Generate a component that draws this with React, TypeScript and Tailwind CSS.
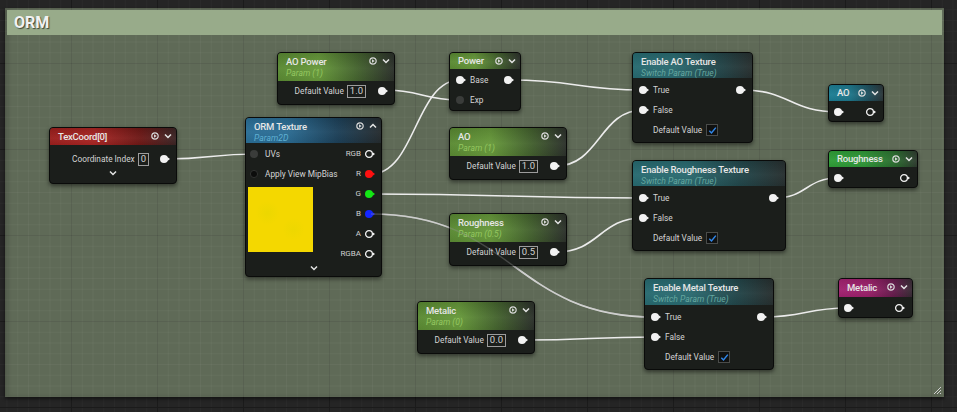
import React from 'react'

type PinKind = 'full' | 'hollow' | 'dim' | 'dark'

const label = 'whitespace-nowrap text-[8.3px] leading-none text-[#d4d4d4]'

const greenHead =
  'bg-[linear-gradient(180deg,rgba(0,0,0,0.12)_0%,rgba(255,255,255,0.03)_55%,rgba(0,0,0,0.05)_100%),linear-gradient(90deg,#5a8a33_0%,#67993b_35%,#45642f_68%,#2c312b_100%)]'
const tealHead =
  'bg-[linear-gradient(180deg,rgba(0,0,0,0.1)_0%,rgba(255,255,255,0.03)_55%,rgba(0,0,0,0.05)_100%),linear-gradient(90deg,#276a70_0%,#2a6a70_35%,#22474b_70%,#272f2f_100%)]'

const wires: [number, number, number, number][] = [
  [166, 159, 256, 154],
  [384, 90, 460, 100],
  [371, 174, 460, 80],
  [510, 80, 643, 90],
  [556, 166, 643, 110],
  [371, 194, 643, 198],
  [371, 214, 655, 317],
  [556, 252, 643, 218],
  [524, 340, 655, 337],
  [742, 90, 838, 112],
  [775, 198, 838, 178],
  [763, 317, 848, 308],
]

function wirePath([x1, y1, x2, y2]: [number, number, number, number]) {
  const d = Math.max(Math.abs(x2 - x1) * 0.5, 24)
  return `M${x1} ${y1}C${x1 + d} ${y1} ${x2 - d} ${y2} ${x2} ${y2}`
}

function Pin({ kind = 'full', color = '#f2f2f2', className = '' }: { kind?: PinKind; color?: string; className?: string }) {
  return (
    <svg width="12" height="10" viewBox="0 0 12 10" className={`shrink-0 ${className}`}>
      {kind === 'full' && (
        <>
          <circle cx="5" cy="5" r="4" fill={color} />
          <path d="M8.4 3.1 L11 5 L8.4 6.9Z" fill={color} />
        </>
      )}
      {kind === 'hollow' && (
        <>
          <circle cx="5" cy="5" r="3.4" fill="none" stroke={color} strokeWidth="1.3" />
          <path d="M9 3.4 L11 5 L9 6.6Z" fill={color} />
        </>
      )}
      {kind === 'dim' && <circle cx="5" cy="5" r="4" fill="#3a3c3a" />}
      {kind === 'dark' && <circle cx="5" cy="5" r="3.6" fill="#0c0d0c" stroke="#303230" strokeWidth="1" />}
    </svg>
  )
}

function Chevron({ up = false }: { up?: boolean }) {
  return (
    <svg width="8" height="8" viewBox="0 0 8 8" className="shrink-0">
      <path d={up ? 'M1 5.5 L4 2.5 L7 5.5' : 'M1 2.5 L4 5.5 L7 2.5'} fill="none" stroke="#e4e4e4" strokeWidth="1.5" />
    </svg>
  )
}

function HeaderIcons({ up = false }: { up?: boolean }) {
  return (
    <div className="absolute right-[4px] top-[4px] flex items-center gap-[5px]">
      <svg width="8" height="8" viewBox="0 0 8 8">
        <circle cx="4" cy="4" r="3.2" fill="none" stroke="#d8d8d8" strokeWidth="1.2" />
        <path d="M3 2.3 L5.7 4 L3 5.7Z" fill="#d8d8d8" />
      </svg>
      <Chevron up={up} />
    </div>
  )
}

function Node({ pos, children }: { pos: string; children: React.ReactNode }) {
  return (
    <div className={`absolute overflow-hidden rounded-[4px] border border-[#0a0b0a] bg-[#1b1e1b] shadow-[0_2px_4px_rgba(0,0,0,0.5)] ${pos}`}>
      {children}
    </div>
  )
}

function SimpleHeader({ h, bg, title, icons = true }: { h: string; bg: string; title: string; icons?: boolean }) {
  return (
    <div className={`relative flex items-center pl-[8px] ${h} ${bg}`}>
      <span className="text-[9.5px] font-medium leading-none tracking-[-0.2px] text-[#e6e6e6]">{title}</span>
      {icons ? <HeaderIcons /> : null}
    </div>
  )
}

function TitledHeader({ h, bg, title, sub, subColor, icons = true, up = false }: { h: string; bg: string; title: string; sub: string; subColor: string; icons?: boolean; up?: boolean }) {
  return (
    <div className={`relative pl-[8px] pt-[3px] ${h} ${bg}`}>
      <div className="h-[12px] text-[9.5px] font-medium leading-[12px] tracking-[-0.2px] text-[#e6e6e6]">{title}</div>
      <div className={`h-[10px] text-[8.6px] italic leading-[10px] ${subColor}`}>{sub}</div>
      {icons ? <HeaderIcons up={up} /> : null}
    </div>
  )
}

function ValueBox({ children }: { children: React.ReactNode }) {
  return (
    <span className="ml-[3px] flex h-[13px] items-center border border-[#9c9c9c] px-[2px] text-[9.5px] leading-none text-[#d2d2d2]">{children}</span>
  )
}

function Check() {
  return (
    <span className="ml-[4px] flex h-[12px] w-[12px] items-center justify-center border border-[#4a4c4a] bg-[#101110]">
      <svg width="9" height="9" viewBox="0 0 9 9">
        <path d="M1.3 4.8 L3.5 7 L7.8 1.6" fill="none" stroke="#2f86e8" strokeWidth="1.5" />
      </svg>
    </span>
  )
}

function ParamNode({ pos, title, sub, value }: { pos: string; title: string; sub: string; value: string }) {
  return (
    <Node pos={pos}>
      <TitledHeader h="h-[28px]" bg={greenHead} title={title} sub={sub} subColor="text-[#94c760]" />
      <div className="flex h-[20px] items-center justify-end pr-[5px]">
        <span className={label}>Default Value</span>
        <ValueBox>{value}</ValueBox>
        <Pin className="ml-[11px]" />
      </div>
      <div className="h-[3px]" />
    </Node>
  )
}

function SwitchNode({ pos, title, h }: { pos: string; title: string; h: string }) {
  return (
    <Node pos={pos}>
      <TitledHeader h={h} bg={tealHead} title={title} sub="Switch Param (True)" subColor="text-[#66a8a0]" icons={false} />
      <div className="pb-[2px] pt-[2px]">
        <div className="flex h-[20px] items-center justify-between pl-[5px] pr-[5px]">
          <div className="flex items-center">
            <Pin />
            <span className={`ml-[3px] ${label}`}>True</span>
          </div>
          <Pin />
        </div>
        <div className="flex h-[20px] items-center pl-[5px]">
          <Pin />
          <span className={`ml-[3px] ${label}`}>False</span>
        </div>
        <div className="flex h-[20px] items-center pl-[20px]">
          <span className={label}>Default Value</span>
          <Check />
        </div>
      </div>
    </Node>
  )
}

function OutputNode({ pos, h, bg, title }: { pos: string; h: string; bg: string; title: string }) {
  return (
    <Node pos={pos}>
      <SimpleHeader h={h} bg={bg} title={title} />
      <div className="flex h-[20px] items-center justify-between pl-[4px] pr-[6px] pt-[1px]">
        <Pin />
        <Pin kind="hollow" />
      </div>
    </Node>
  )
}

function TexRow({ name, kind = 'hollow', color = '#f2f2f2' }: { name: string; kind?: PinKind; color?: string }) {
  return (
    <div className="flex h-[20px] items-center justify-end">
      <span className="text-[8px] leading-none text-[#cfcfcf]">{name}</span>
      <Pin kind={kind} color={color} className="ml-[3px]" />
    </div>
  )
}

export default function App() {
  return (
    <div className="relative h-[412px] w-[957px] overflow-hidden bg-[#252525] bg-[linear-gradient(to_right,#1b1b1b_1px,transparent_1px),linear-gradient(to_bottom,#1b1b1b_1px,transparent_1px),linear-gradient(to_right,#2a2a2a_1px,transparent_1px),linear-gradient(to_bottom,#2a2a2a_1px,transparent_1px)] bg-[size:86px_86px,86px_86px,10.75px_10.75px,10.75px_10.75px] bg-[position:71px_63px,71px_63px,71px_63px,71px_63px] font-['Roboto','Noto_Sans',sans-serif]">
      <div className="absolute left-[5px] top-[8px] h-[389px] w-[939px] bg-[#5f6a57] bg-[linear-gradient(to_right,rgba(0,0,0,0.13)_1px,transparent_1px),linear-gradient(to_bottom,rgba(0,0,0,0.13)_1px,transparent_1px),linear-gradient(to_right,rgba(255,255,255,0.035)_1px,transparent_1px),linear-gradient(to_bottom,rgba(255,255,255,0.035)_1px,transparent_1px)] bg-[size:86px_86px,86px_86px,10.75px_10.75px,10.75px_10.75px] bg-[position:66px_55px,66px_55px,66px_55px,66px_55px] p-[2px] shadow-[inset_3px_0_4px_rgba(0,0,0,0.18),0_2px_3px_rgba(0,0,0,0.5)]">
        <div className="flex h-[25px] items-center bg-[#98ab8a] pl-[7px]">
          <span className="text-[16px] font-bold leading-none text-[#f2f2f2] [text-shadow:1px_1px_1px_rgba(0,0,0,0.6)]">ORM</span>
        </div>
        <svg width="9" height="9" viewBox="0 0 9 9" className="absolute bottom-[2px] right-[2px]">
          <path d="M8 1 L1 8 M8 4 L4 8 M8 7 L7 8" stroke="#d0d0d0" strokeWidth="1" />
        </svg>
      </div>

      <svg width="957" height="412" className="absolute left-0 top-0">
        {wires.map((w, i) => (
          <path key={i} d={wirePath(w)} fill="none" stroke="#ececec" strokeWidth="1.6" />
        ))}
      </svg>

      <Node pos="left-[49px] top-[127px] w-[128px]">
        <SimpleHeader
          h="h-[17px]"
          bg="bg-[linear-gradient(180deg,rgba(0,0,0,0.1)_0%,rgba(255,255,255,0.04)_60%,rgba(0,0,0,0.05)_100%),linear-gradient(90deg,#9a1e1c_0%,#a82523_35%,#6c1816_72%,#3a2424_100%)]"
          title="TexCoord[0]"
        />
        <div className="pt-[4px]">
          <div className="flex h-[20px] items-center justify-end pr-[5px]">
            <span className={label}>Coordinate Index</span>
            <ValueBox>0</ValueBox>
            <Pin className="ml-[10px]" />
          </div>
          <div className="flex h-[14px] items-start justify-center">
            <Chevron />
          </div>
        </div>
      </Node>

      <ParamNode pos="left-[277px] top-[52px] w-[118px]" title="AO Power" sub="Param (1)" value="1.0" />

      <Node pos="left-[245px] top-[117px] w-[137px]">
        <TitledHeader
          h="h-[25px]"
          bg="bg-[linear-gradient(180deg,rgba(0,0,0,0.1)_0%,rgba(255,255,255,0.03)_55%,rgba(0,0,0,0.05)_100%),linear-gradient(90deg,#2a6e96_0%,#2b6c93_30%,#1d4058_68%,#252b2e_100%)]"
          title="ORM Texture"
          sub="Param2D"
          subColor="text-[#5fb0d2]"
          up
        />
        <div className="flex justify-between pr-[5px] pt-[1px]">
          <div className="flex flex-col">
            <div className="flex h-[20px] items-center pl-[3px]">
              <Pin kind="dim" />
              <span className={`ml-[4px] ${label}`}>UVs</span>
            </div>
            <div className="flex h-[20px] items-center pl-[3px]">
              <Pin kind="dark" />
              <span className={`ml-[4px] ${label}`}>Apply View MipBias</span>
            </div>
            <div className="ml-[2px] mt-[3px] h-[65px] w-[65px] bg-[#f4d800] bg-[radial-gradient(circle_at_30%_40%,rgba(200,210,0,0.18)_0%,transparent_20%),radial-gradient(circle_at_70%_65%,rgba(200,210,0,0.15)_0%,transparent_18%)]" />
          </div>
          <div className="flex flex-col">
            <TexRow name="RGB" />
            <TexRow name="R" kind="full" color="#ff1010" />
            <TexRow name="G" kind="full" color="#14e614" />
            <TexRow name="B" kind="full" color="#1426ff" />
            <TexRow name="A" />
            <TexRow name="RGBA" />
          </div>
        </div>
        <div className="flex h-[12px] items-start justify-center">
          <Chevron />
        </div>
      </Node>

      <Node pos="left-[449px] top-[52px] w-[72px]">
        <SimpleHeader h="h-[16px]" bg={greenHead} title="Power" />
        <div className="pt-[1px]">
          <div className="flex h-[20px] items-center justify-between pl-[5px] pr-[5px]">
            <div className="flex items-center">
              <Pin />
              <span className={`ml-[3px] ${label}`}>Base</span>
            </div>
            <Pin />
          </div>
          <div className="flex h-[20px] items-center pl-[5px]">
            <Pin kind="dim" />
            <span className={`ml-[3px] ${label}`}>Exp</span>
          </div>
        </div>
      </Node>

      <ParamNode pos="left-[449px] top-[127px] w-[118px]" title="AO" sub="Param (1)" value="1.0" />
      <ParamNode pos="left-[449px] top-[213px] w-[118px]" title="Roughness" sub="Param (0.5)" value="0.5" />
      <ParamNode pos="left-[417px] top-[301px] w-[118px]" title="Metalic" sub="Param (0)" value="0.0" />

      <svg width="957" height="412" className="pointer-events-none absolute left-0 top-0">
        <path d={wirePath(wires[6])} fill="none" stroke="rgba(150,150,150,0.35)" strokeWidth="1.4" />
      </svg>

      <SwitchNode pos="left-[632px] top-[52px] w-[121px]" h="h-[25px]" title="Enable AO Texture" />
      <SwitchNode pos="left-[632px] top-[160px] w-[154px]" h="h-[25px]" title="Enable Roughness Texture" />
      <SwitchNode pos="left-[644px] top-[278px] w-[130px]" h="h-[26px]" title="Enable Metal Texture" />

      <OutputNode
        pos="left-[828px] top-[84px] w-[56px]"
        h="h-[16px]"
        bg="bg-[linear-gradient(180deg,rgba(0,0,0,0.08)_0%,rgba(255,255,255,0.04)_60%,rgba(0,0,0,0.05)_100%),linear-gradient(90deg,#1b7d93_0%,#1d7488_40%,#1f4d5a_75%,#2a3437_100%)]"
        title="AO"
      />
      <OutputNode
        pos="left-[828px] top-[150px] w-[90px]"
        h="h-[16px]"
        bg="bg-[linear-gradient(180deg,rgba(0,0,0,0.08)_0%,rgba(255,255,255,0.04)_60%,rgba(0,0,0,0.05)_100%),linear-gradient(90deg,#2e9c36_0%,#2f9537_40%,#2a6a2e_75%,#2d3a2e_100%)]"
        title="Roughness"
      />
      <OutputNode
        pos="left-[838px] top-[278px] w-[75px]"
        h="h-[18px]"
        bg="bg-[linear-gradient(180deg,rgba(0,0,0,0.08)_0%,rgba(255,255,255,0.04)_60%,rgba(0,0,0,0.05)_100%),linear-gradient(90deg,#a0216f_0%,#9a2069_40%,#651b4c_75%,#362a33_100%)]"
        title="Metalic"
      />
    </div>
  )
}
